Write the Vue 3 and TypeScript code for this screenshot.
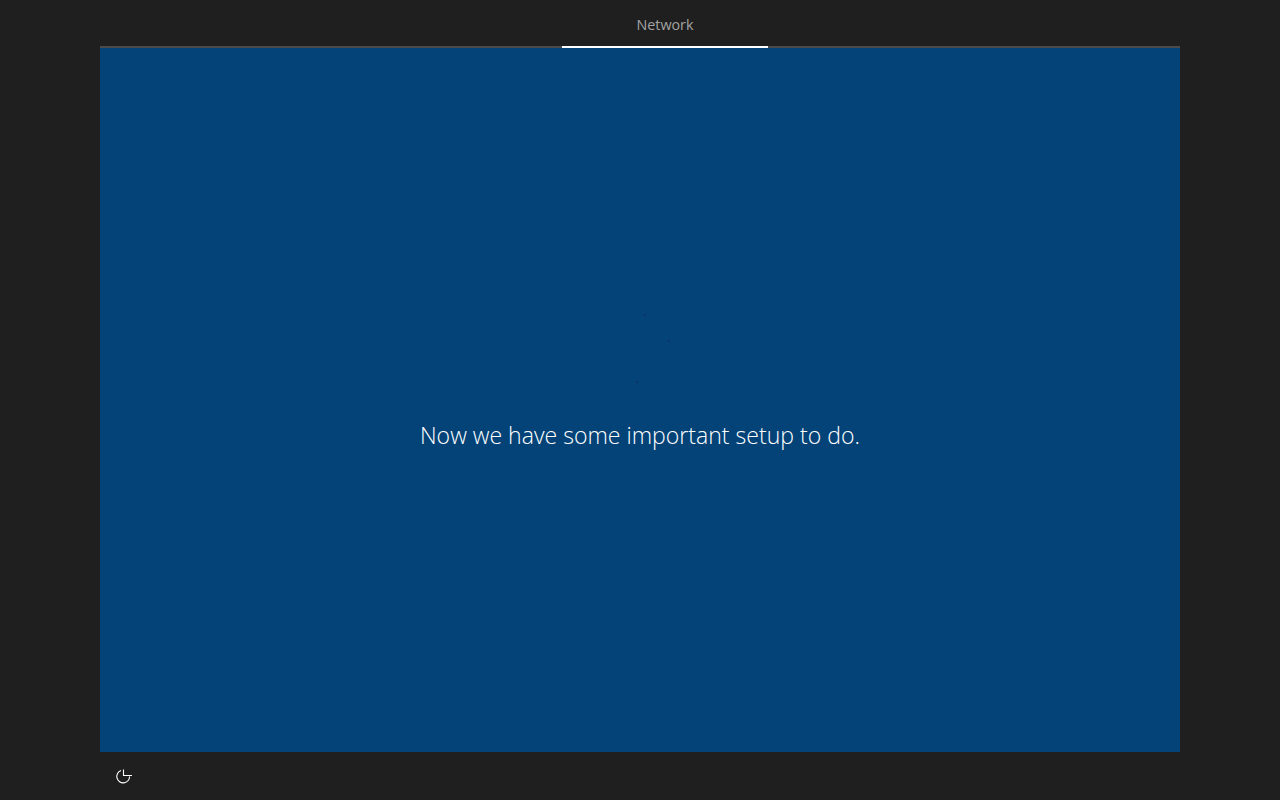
<script setup lang="ts">
const tab: string = 'Network'
const message: string = 'Now we have some important setup to do.'
const specks = [
  { x: 644, y: 314 },
  { x: 668, y: 340 },
  { x: 636, y: 381 },
]
</script>

<template>
  <div class="oobe">
    <header class="tabs">
      <div class="tab">{{ tab }}</div>
    </header>
    <main class="panel">
      <span
        v-for="s in specks"
        :key="s.x"
        class="speck"
        :style="{ left: s.x - 100 + 'px', top: s.y - 48 + 'px' }"
      ></span>
      <p class="message">{{ message }}</p>
    </main>
    <footer class="foot">
      <svg class="icon" width="18" height="18" viewBox="0 0 18 18" fill="none" stroke="#fff" stroke-width="1.1">
        <path d="M6 3.5A6.4 6.4 0 1 0 14.6 9.5" />
        <path d="M8.5 2.6V8.5H17" />
      </svg>
    </footer>
  </div>
</template>

<style>
html, body { margin: 0; background: #1f1f1f; }
</style>

<style scoped>
.oobe {
  width: 1280px;
  height: 800px;
  background: #1f1f1f;
  display: flex;
  flex-direction: column;
  align-items: center;
  font-family: "Open Sans", "Noto Sans", sans-serif;
  overflow: hidden;
}
.tabs {
  width: 1080px;
  height: 48px;
  box-sizing: border-box;
  border-bottom: 2px solid #4b4b4b;
  display: flex;
  padding-left: 462px;
  flex-shrink: 0;
}
.tab {
  width: 206px;
  height: 48px;
  box-sizing: border-box;
  border-bottom: 2px solid #fff;
  color: #a3a3a3;
  font-size: 14.3px;
  line-height: 50px;
  text-align: center;
}
.panel {
  position: relative;
  width: 1080px;
  height: 704px;
  background: #034377;
  flex-shrink: 0;
  display: flex;
  justify-content: center;
}
.message {
  margin: 369px 0 0;
  color: #ffffff;
  font-size: 23.07px;
  font-weight: 300;
  line-height: 36px;
  white-space: nowrap;
}
.speck {
  position: absolute;
  width: 2px;
  height: 2px;
  background: #0d3563;
}
.foot {
  width: 1080px;
  height: 48px;
  flex-shrink: 0;
  display: flex;
  align-items: center;
  padding-left: 15px;
  box-sizing: border-box;
}
.icon { margin-top: -1px; }
</style>
